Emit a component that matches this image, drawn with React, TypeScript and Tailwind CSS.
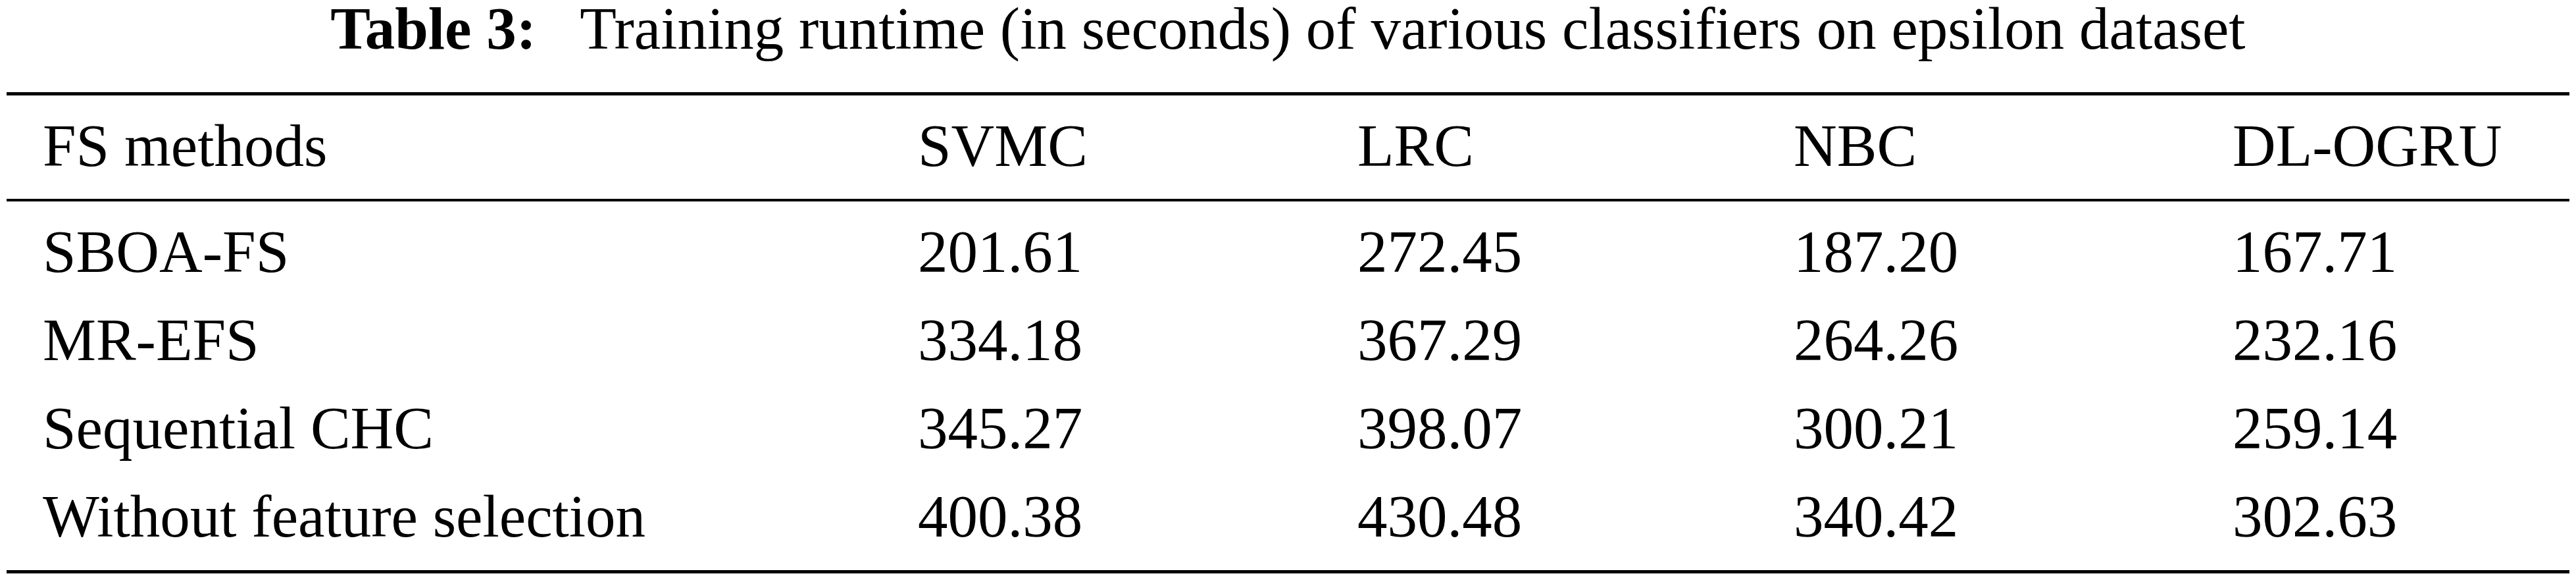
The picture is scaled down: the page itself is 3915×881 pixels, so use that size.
import React from "react";

const rows: string[][] = [
  ["SBOA-FS", "201.61", "272.45", "187.20", "167.71"],
  ["MR-EFS", "334.18", "367.29", "264.26", "232.16"],
  ["Sequential CHC", "345.27", "398.07", "300.21", "259.14"],
  ["Without feature selection", "400.38", "430.48", "340.42", "302.63"],
];

const header = ["FS methods", "SVMC", "LRC", "NBC", "DL-OGRU"];

function Row({ cells }: { cells: string[] }) {
  return (
    <div className="grid grid-cols-[1330px_668px_663px_667px_1fr] h-[134px] leading-[134px]">
      {cells.map((c, i) => (
        <div key={i} className="pl-[55px] whitespace-nowrap">
          {c}
        </div>
      ))}
    </div>
  );
}

export default function App() {
  return (
    <div
      className="w-[3915px] h-[881px] bg-white text-black px-[10px]"
      style={{ fontFamily: '"Liberation Serif", "Times New Roman", serif' }}
    >
      <div className="text-[91px] leading-[88px] h-[88px] text-center whitespace-nowrap">
        <span className="font-bold">Table 3:</span>
        <span className="ml-[45px]"> Training runtime (in seconds) of various classifiers on epsilon dataset</span>
      </div>
      <div className="mt-[52px] h-[5px] bg-black" />
      <div className="text-[91px] pt-[10px] pb-[13px]">
        <Row cells={header} />
      </div>
      <div className="h-[4px] bg-black" />
      <div className="text-[91px] pt-[10px] pb-[14px]">
        {rows.map((r, i) => (
          <Row key={i} cells={r} />
        ))}
      </div>
      <div className="h-[5px] bg-black" />
    </div>
  );
}
